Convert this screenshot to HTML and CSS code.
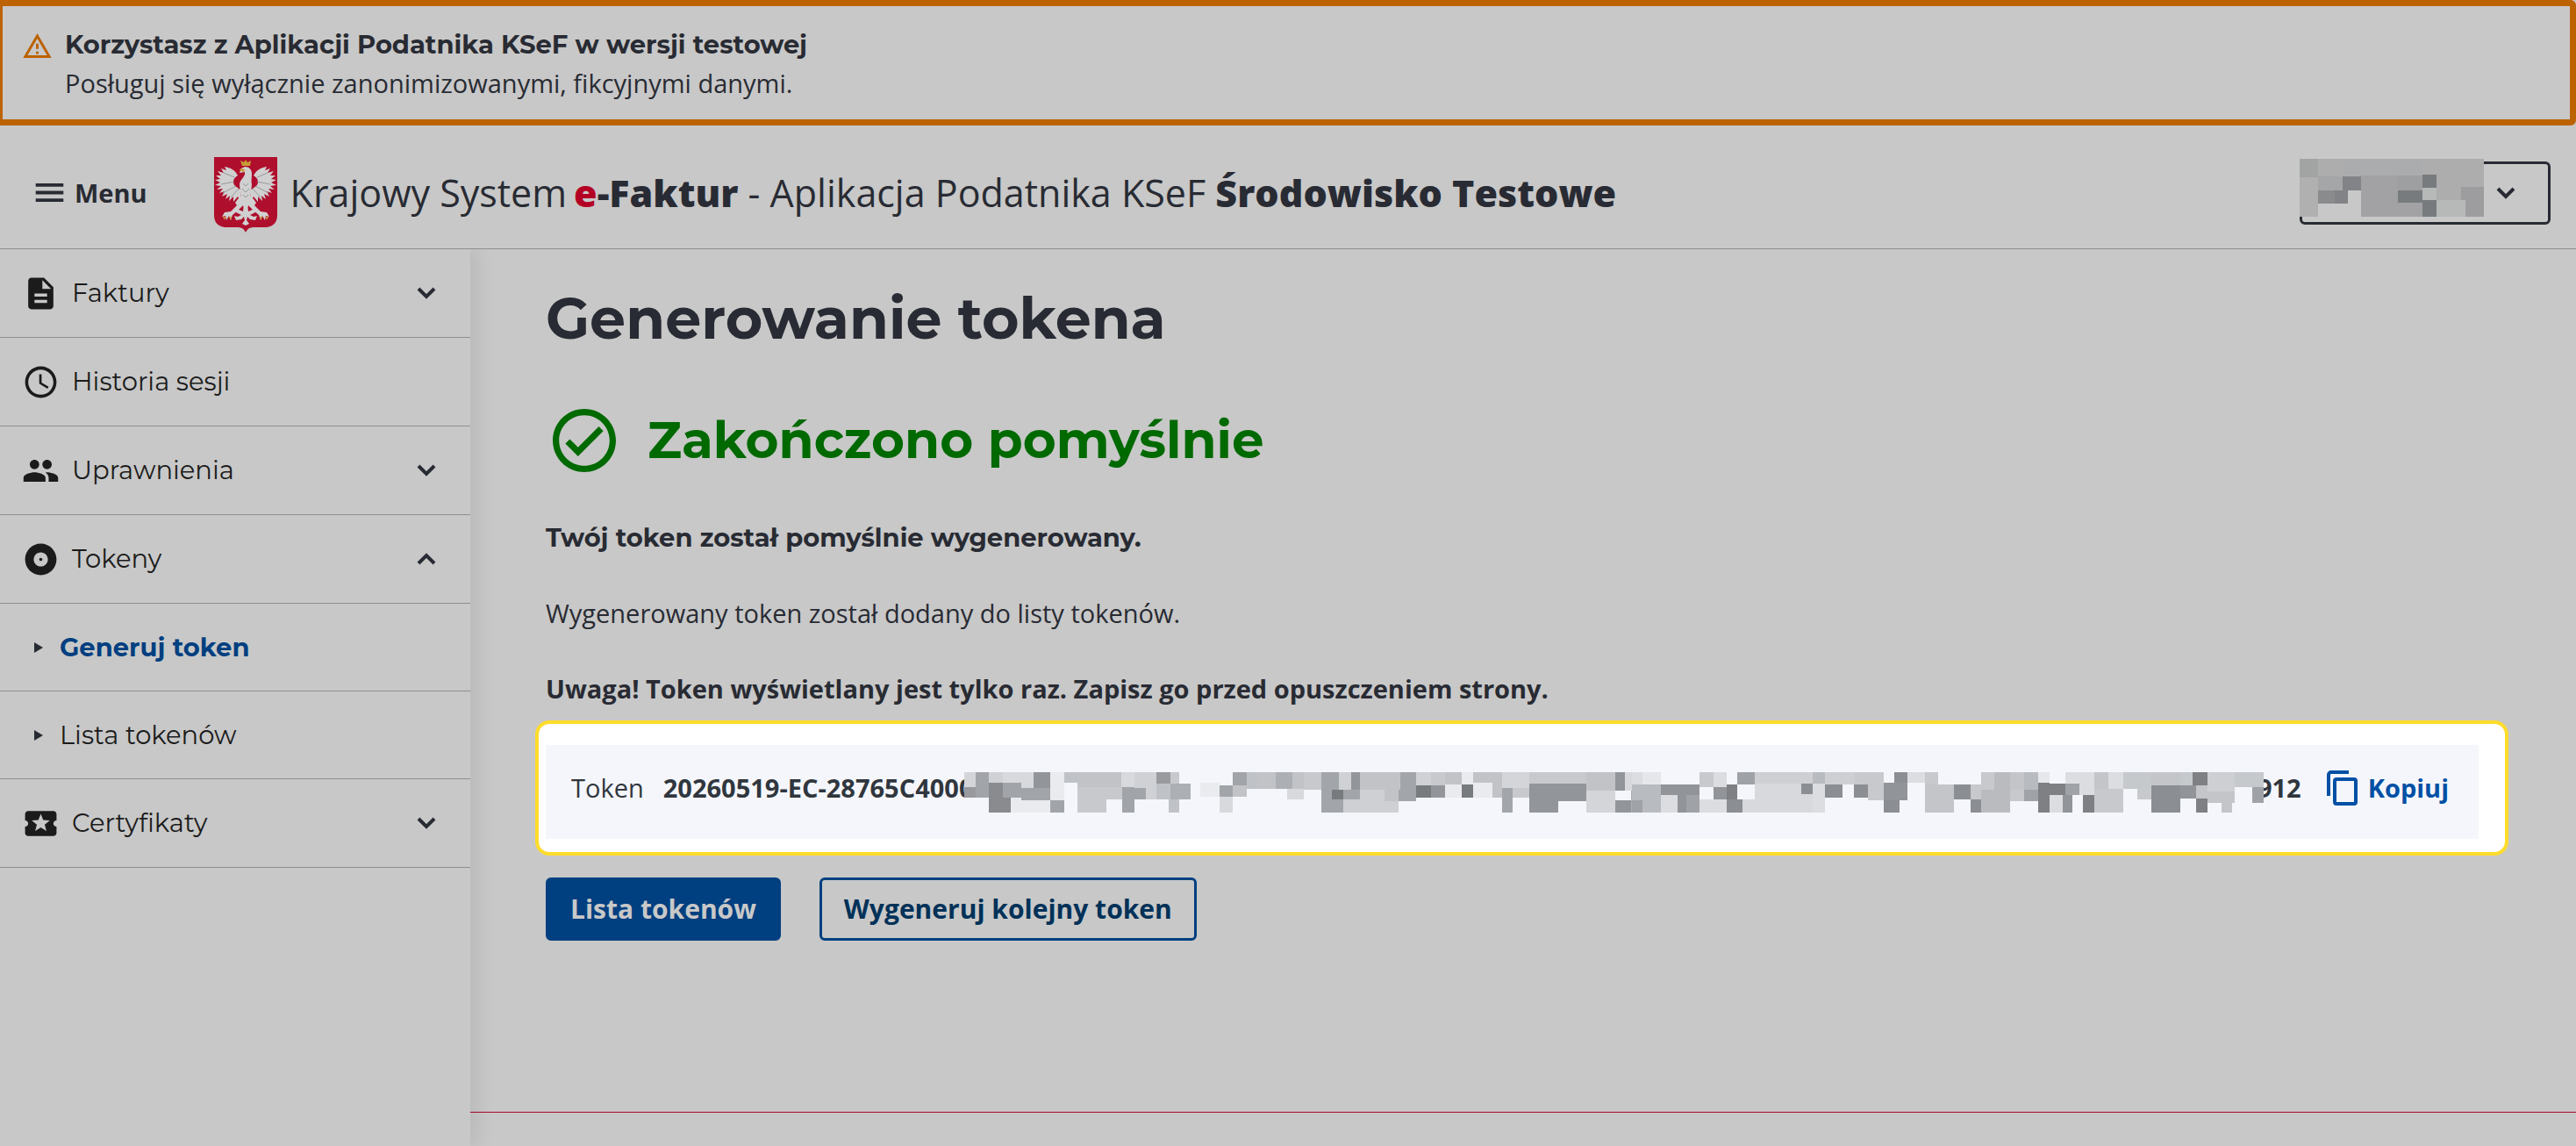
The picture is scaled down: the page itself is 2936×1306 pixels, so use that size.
FILE: index.html
```html
<!DOCTYPE html>
<html lang="pl">
<head>
<meta charset="utf-8">
<title>Generowanie tokena</title>
<link rel="stylesheet" href="styles.css">
</head>
<body>
<div class="app">
  <div class="notice" role="status">
    <svg class="notice-icon" viewBox="1 2 22 19" aria-hidden="true"><path d="M12 5.99 19.53 19H4.47L12 5.99M12 2 1 21h22L12 2zm1 14h-2v2h2v-2zm0-6h-2v4h2v-4z"/></svg>
    <div>
      <p class="notice-title">Korzystasz z Aplikacji Podatnika KSeF w wersji testowej</p>
      <p class="notice-text">Posługuj się wyłącznie zanonimizowanymi, fikcyjnymi danymi.</p>
    </div>
  </div>

  <header class="header">
    <button class="menu-button" type="button">
      <svg class="menu-icon" viewBox="0 0 33 23" aria-hidden="true"><path d="M0 0h33v4H0zM0 9h33v4H0zM0 18h33v4H0z"/></svg>
      Menu
    </button>
    <svg class="crest" viewBox="0 0 72 86" aria-hidden="true">
      <path fill="#af0e2d" d="M0 0h72v66c0 8-4 13-12 14H46c-6 0-8 2-10 6-2-4-4-6-10-6H12C4 79 0 74 0 66z"/>
      <g id="wing" fill="#d0d0d0">
        <path d="M31 38c-2-2-5-3-7-5-4-4-2-9 3-12-3-6-8-9-15-10l2 4-6-2 3 5-7-2 4 5-6 0 5 4-6 1 6 3-6 3 7 1-5 4 7-1-4 5 6-2-3 6 6-3-2 6 5-4-1 6 5-5 0 6 5-6 3 5z"/>
        <path d="M30 44l-6 8 2 3-7 7-7 1-3 5 4-1 1 5 3-5 2 5 2-6 6-5 6-6 4-6z"/>
      </g>
      <use href="#wing" transform="matrix(-1 0 0 1 72 0)"/>
      <g fill="#d0d0d0">
        <path d="M31 13l4-2c5 0 8 3 8 8 0 5-1 8 0 13l-3 22-4 6-4-6-3-22c0-7 7-9 6-15l-6 1z"/>
        <path d="M34 52h4l1 10 7-3 1 4-6 3 4 2 4-1-2 5-6-1-3-3-1 4 3 4-4 2-4-2 3-4-1-4-3 3-6 1-2-5 4 1 4-2-6-3 1-4 7 3z"/>
      </g>
      <path fill="none" stroke="#96989c" stroke-width="1" d="M28 36l-9 10M25 33l-15 8M23 28l-15 3M23 23l-12-5M44 36l9 10M47 33l15 8M49 28l15 3M49 23l12-5M33 30l3 3 3-3M32 36l4 4 4-4M33 43l3 3 3-3"/>
      <path fill="#c79b35" d="M32 10l-2-6 4 2 2-3 2 3 4-2-1 6zM30 13l5 1-1 3-5-2zM10 68l2 4 1-4zM17 68l2 4 1-4zM62 68l-2 4-1-4zM55 68l-2 4-1-4z"/>
    </svg>
    <p class="brand">Krajowy System<b class="brand-name"><span class="brand-e">e</span>-Faktur</b> - Aplikacja Podatnika KSeF <b>Środowisko Testowe</b></p>
    <button class="account" type="button" aria-label="Konto">
      <svg class="account-mask" viewBox="0 0 210 66" aria-hidden="true" shape-rendering="crispEdges">
        <path fill="#adadad" d="M0 0h210v66H0z"/><path fill="#a2a4a3" d="M0 0h21v21H0z"/><path fill="#b0b0b0" d="M0 21h21v45H0z"/>
        <path fill="#abacae" d="M49 0h91v19H49z"/><path fill="#a4a6a8" d="M21 20h28v16H21z"/><path fill="#828387" d="M49 20h21v16H49z"/>
        <path fill="#8a8b8d" d="M21 36h19v15H21z"/><path fill="#828387" d="M40 36h15v15H40z"/><path fill="#c8c8c8" d="M21 51h49v15H21zM55 36h15v15H55z"/>
        <path fill="#a2a2a4" d="M70 19h70v47H70z"/><path fill="#9e9fa1" d="M112 19h28v17h-28z"/><path fill="#777b7e" d="M112 36h28v14h-28zM140 18h16v15h-16zM140 47h16v19h-16z"/>
        <path fill="#b6b9b8" d="M140 33h16v14h-16zM156 47h33v19h-33z"/><path fill="#9d9d9f" d="M184 32h26v15h-26zM189 47h21v19h-21z"/>
      </svg>
      <svg class="chevron" viewBox="0 0 22 14" aria-hidden="true"><path d="M2 2l9 9 9-9"/></svg>
    </button>
  </header>

  <div class="body">
    <nav class="sidebar" aria-label="Menu">
      <a class="nav-item" href="#faktury">
        <svg class="nav-icon" viewBox="0 0 24 24" aria-hidden="true"><path d="M14 2H6c-1.100 0-1.990.9-1.990 2L4 20c0 1.100.89 2 1.990 2H18c1.100 0 2-.9 2-2V8l-6-6zm2 16H8v-2h8v2zm0-4H8v-2h8v2zm-3-5V3.500L18.500 9H13z"/></svg>
        <span>Faktury</span>
        <svg class="chevron" viewBox="0 0 22 14" aria-hidden="true"><path d="M2 2l9 9 9-9"/></svg>
      </a>
      <a class="nav-item" href="#historia">
        <svg class="nav-icon" viewBox="0 0 24 24" aria-hidden="true"><path d="M11.990 2C6.470 2 2 6.480 2 12s4.470 10 9.990 10C17.520 22 22 17.520 22 12S17.520 2 11.990 2zM12 20c-4.420 0-8-3.580-8-8s3.580-8 8-8 8 3.580 8 8-3.580 8-8 8zm.5-13H11v6l5.250 3.150.75-1.230-4.500-2.670z"/></svg>
        <span>Historia sesji</span>
      </a>
      <a class="nav-item" href="#uprawnienia">
        <svg class="nav-icon" viewBox="0 0 24 24" aria-hidden="true"><path d="M16 11c1.660 0 2.990-1.340 2.990-3S17.660 5 16 5c-1.660 0-3 1.340-3 3s1.340 3 3 3zm-8 0c1.660 0 2.990-1.340 2.990-3S9.660 5 8 5C6.340 5 5 6.340 5 8s1.340 3 3 3zm0 2c-2.330 0-7 1.170-7 3.500V19h14v-2.500c0-2.330-4.670-3.500-7-3.500zm8 0c-.29 0-.62.02-.97.05 1.160.84 1.970 1.970 1.970 3.450V19h6v-2.500c0-2.330-4.670-3.500-7-3.500z"/></svg>
        <span>Uprawnienia</span>
        <svg class="chevron" viewBox="0 0 22 14" aria-hidden="true"><path d="M2 2l9 9 9-9"/></svg>
      </a>
      <a class="nav-item" href="#tokeny">
        <svg class="nav-icon" viewBox="0 0 24 24" aria-hidden="true"><path d="M12 2C6.480 2 2 6.480 2 12s4.480 10 10 10 10-4.480 10-10S17.520 2 12 2zm0 14.500c-2.490 0-4.500-2.010-4.500-4.500S9.510 7.500 12 7.500s4.500 2.010 4.500 4.500-2.010 4.500-4.500 4.500zm0-5.500c-.55 0-1 .45-1 1s.45 1 1 1 1-.45 1-1-.45-1-1-1z"/></svg>
        <span>Tokeny</span>
        <svg class="chevron" viewBox="0 0 22 14" aria-hidden="true"><path d="M2 12l9-9 9 9"/></svg>
      </a>
      <a class="nav-item nav-sub nav-current" href="#generuj" aria-current="page">
        <svg class="nav-arrow" viewBox="0 0 10 12" aria-hidden="true"><path d="M0 0l10 6-10 6z"/></svg>
        <span>Generuj token</span>
      </a>
      <a class="nav-item nav-sub" href="#lista">
        <svg class="nav-arrow" viewBox="0 0 10 12" aria-hidden="true"><path d="M0 0l10 6-10 6z"/></svg>
        <span>Lista tokenów</span>
      </a>
      <a class="nav-item" href="#certyfikaty">
        <svg class="nav-icon" viewBox="0 0 24 24" aria-hidden="true"><path d="M20 12c0-1.100.9-2 2-2V6c0-1.100-.9-2-2-2H4c-1.100 0-1.990.9-1.990 2v4c1.100 0 1.990.9 1.990 2s-.89 2-2 2v4c0 1.100.9 2 2 2h16c1.100 0 2-.9 2-2v-4c-1.100 0-2-.9-2-2zm-4.420 4.800L12 14.500l-3.580 2.300 1.080-4.120-3.290-2.690 4.240-.25L12 5.800l1.540 3.950 4.240.25-3.290 2.690 1.090 4.110z"/></svg>
        <span>Certyfikaty</span>
        <svg class="chevron" viewBox="0 0 22 14" aria-hidden="true"><path d="M2 2l9 9 9-9"/></svg>
      </a>
    </nav>

    <main class="main">
      <h1 class="page-title">Generowanie tokena</h1>
      <h2 class="success">
        <svg class="success-icon" viewBox="2 2 20 20" aria-hidden="true"><path d="M12 2C6.480 2 2 6.480 2 12s4.480 10 10 10 10-4.480 10-10S17.520 2 12 2zm0 18c-4.410 0-8-3.590-8-8s3.590-8 8-8 8 3.590 8 8-3.590 8-8 8zm4.590-12.420L10 14.170l-2.590-2.580L6 13l4 4 8-8-1.410-1.420z"/></svg>
        Zakończono pomyślnie
      </h2>
      <p class="lead">Twój token został pomyślnie wygenerowany.</p>
      <p class="text">Wygenerowany token został dodany do listy tokenów.</p>
      <p class="text text-strong">Uwaga! Token wyświetlany jest tylko raz. Zapisz go przed opuszczeniem strony.</p>

      <section class="spotlight">
        <div class="token">
          <span class="token-label">Token</span>
          <b>20260519-EC-28765C4000</b>
          <svg class="token-mask" viewBox="35 63 2909 138" preserveAspectRatio="none" aria-hidden="true" shape-rendering="crispEdges">
            <path fill="#f5f6fb" d="M35 63h2909v138H35z"/>
            <path fill="#d4d5d9" d="M35 63h26v51H35zM1427 126h65v75h-65zM1239 63h60v54h-60z"/>
            <path fill="#989a9e" d="M35 114h26v36H35zM466 63h30v39h-30z"/>
            <path fill="#a1a5a9" d="M61 63h29v87H61zM122 99h41v51h-41zM163 117h64v42h-64zM227 159h32v42h-32zM388 114h28v87h-28zM416 117h25v39h-25zM635 63h33v45h-33zM606 108h29v39h-29z"/>
            <path fill="#d0d1d5" d="M90 63h32v36H90zM416 63h25v54h-25zM441 63h25v93h-25zM1047 63h33v45h-33zM874 63h26v60h-26z"/>
            <path fill="#d8d9dd" d="M122 63h68v36h-68zM163 99h27v18h-27zM386 63h30v51h-30zM606 147h29v54h-29zM757 120h37v36h-37zM1513 63h39v63h-39z"/>
            <path fill="#8a8b8e" d="M90 99h32v51H90zM90 150h49v51H90z"/>
            <path fill="#929599" d="M190 63h37v54h-37zM900 63h21v60h-21zM1299 102h128v60h-128zM1299 162h65v39h-65zM1492 63h21v63h-21zM1492 159h35v42h-35zM1079 108h32v42h-32z"/>
            <path fill="#eaebef" d="M139 150h24v9h64v42h-88zM227 63h32v96h-32zM563 99h43v48h-43zM1149 63h25v42h-25zM1174 99h43v51h-43zM1111 105h38v45h-38z"/>
            <path fill="#bfc3c8" d="M259 63h29v36h-29zM466 102h30v54h-30zM492 156h25v45h-25zM668 63h24v57h-24z"/>
            <path fill="#c2c3c7" d="M288 63h65v51h-65zM353 63h33v51h-33zM635 108h33v39h-33zM692 63h41v57h-41zM770 63h24v57h-24zM921 63h90v60h-90zM976 123h31v39h-31zM1111 63h38v42h-38zM1174 63h65v36h-65zM1217 99h22v51h-22zM1427 63h65v63h-65z"/>
            <path fill="#c8c9cd" d="M288 114h65v87h-65zM353 114h35v42h-35zM794 63h41v60h-41zM496 63h21v39h-21zM1080 63h31v45h-31zM1262 117h37v33h-37zM1299 63h128v39h-128z"/>
            <path fill="#acb0b5" d="M496 102h45v54h-45zM733 63h37v57h-37zM1527 126h41v75h-41z"/>
            <path fill="#a2a6aa" d="M835 63h39v138h-39zM874 156h10v45h-10zM884 123h37v33h-37zM1011 63h36v99h-40v-39h4zM1239 117h23v84h-23z"/>
            <path fill="#777b7e" d="M857 123h27v33h-27zM1047 108h32v42h-32zM1149 105h25v45h-25z"/>
            <path fill="#cfd0d4" d="M921 123h55v39h31v39H884v-45h37z"/>
            <g transform="translate(1529 0)">
              <path fill="#dcdde1" d="M0 63h24v42H0zM65 141h37v60H65zM182 63h30v51h-30zM151 156h61v45h-61zM617 63h40v36h-40zM1066 63h34v57h-34zM1002 102h33v39h-33zM935 141h29v60h-29zM404 102h29v99h-29zM970 63h65v39h-65z"/>
              <path fill="#e6e7eb" d="M24 63h41v42H24zM909 63h26v36h-26z"/>
              <path fill="#b8bbc0" d="M0 105h65v96H24v-42H0zM404 63h29v39h-29zM878 63h31v60h-31z"/>
              <path fill="#9fa3a7" d="M0 159h24v42H0zM123 141h28v60h-28zM235 63h41v42h-41zM878 123h31v39h-31zM970 102h32v39h-32zM1388 114h27v54h-27z"/>
              <path fill="#919498" d="M65 105h86v36H65zM102 141h21v60h-21zM182 114h30v42h-30zM564 99h53v60h-53zM964 141h22v60h-22zM1227 108h35v45h-35z"/>
              <path fill="#c8c9cd" d="M151 63h31v51h-31zM500 63h29v42h-29zM529 63h35v96h-35zM657 63h29v42h-29zM782 63h29v60h-29zM759 105h23v51h-23zM847 123h31v39h-31zM1131 120h31v36h-31zM1035 120h65v81h-65z"/>
              <path fill="#7e8083" d="M212 105h23v51h-23zM935 102h35v39h-35zM909 99h26v102h-26zM1009 141h26v60h-26zM1256 63h32v45h-32zM1262 153h26v48h-26z"/>
              <path fill="#8b8e92" d="M212 156h35v45h-35zM380 102h24v36h-24zM433 105h39v45h-39zM498 105h31v45h-31zM588 63h29v36h-29zM564 159h36v42h-36zM721 105h38v51h-38zM759 156h23v45h-23zM1162 108h65v93h-65z"/>
              <path fill="#cecfd3" d="M276 63h128v39H276zM433 63h67v42h-67zM1288 63h62v66h-62z"/>
              <path fill="#d8d9dd" d="M276 102h104v36h24v63H247v-45h29z"/>
              <path fill="#c4c5c9" d="M657 105h64v96h-64zM847 63h31v60h-31zM1035 63h31v57h-31zM1162 63h65v45h-65zM1262 108h26v45h-26zM1288 129h62v39h-62zM1319 168h24v33h-24z"/>
              <path fill="#babbbf" d="M811 63h36v138h-65v-78h29z"/>
              <path fill="#c5c9cc" d="M1100 63h62v57h-62zM1227 63h29v45h-29zM1350 63h65v51h-65z"/>
            </g>
          </svg>
          <b>912</b>
          <button class="copy" type="button">
            <svg class="copy-icon" viewBox="0 0 35 40" aria-hidden="true"><path d="M2 29V5a3 3 0 0 1 3-3h20"/><rect x="9" y="10" width="24" height="28" rx="2"/></svg>
            Kopiuj
          </button>
        </div>
      </section>

      <div class="actions">
        <button class="btn btn-primary" type="button">Lista tokenów</button>
        <button class="btn" type="button">Wygeneruj kolejny token</button>
      </div>
      <hr class="rule">
    </main>
  </div>
</div>
</body>
</html>
```
FILE: styles.css
```css
* { box-sizing: border-box; }

body {
  margin: 0;
  background: #c8c8c8;
  color: #282b33;
  font: 400 29px/44px "Open Sans", sans-serif;
}

p, h1, h2 { margin: 0; }

button {
  font: inherit;
  color: inherit;
  background: none;
  border: 0;
  padding: 0;
}

svg { display: block; flex: none; }

.app {
  min-height: 100vh;
  display: flex;
  flex-direction: column;
}

.notice {
  display: flex;
  gap: 15px;
  padding: 22px 24px 19px 23px;
  border: 7px solid #bc6200;
  border-left-width: 3px;
  border-radius: 0 6px 6px 0;
}
.notice-icon { width: 33px; height: 28px; margin-top: 9px; fill: #bc6200; }
.notice-title { font: 700 29px/44px Montserrat, Inter, sans-serif; }

.header {
  display: flex;
  align-items: center;
  height: 141px;
  padding: 13px 29px 0 40px;
  border-bottom: 1px solid #8f8f8f;
}
.menu-button { display: flex; align-items: center; gap: 12px; font-weight: 700; }
.menu-icon { width: 33px; height: 22px; fill: #282b33; }
.crest { width: 72px; height: 86px; margin: 5px 0 0 76px; }
.brand { margin-left: 15px; font-size: 43px; line-height: 60px; }
.brand b { font-weight: 800; }
.brand .brand-name { margin-left: 8px; }
.brand-e { color: #b40024; }
.account {
  display: flex;
  align-items: center;
  gap: 14px;
  width: 286px;
  height: 72px;
  margin-left: auto;
  border: 3px solid #282b33;
  border-radius: 6px;
}
.account-mask { width: 210px; height: 66px; margin: -12px 0 0 -3px; }

.chevron {
  width: 22px;
  height: 14px;
  fill: none;
  stroke: #282b33;
  stroke-width: 4;
}

.body { flex: 1; display: flex; }

.sidebar {
  width: 536px;
  flex: none;
  box-shadow: 8px 0 20px rgba(0, 0, 0, 0.08);
  clip-path: inset(0 -40px 0 0);
}
.nav-item {
  display: flex;
  align-items: center;
  gap: 14px;
  height: 101px;
  padding: 0 39px 0 25px;
  border-bottom: 1px solid #8f8f8f;
  color: #1b1b1b;
  font: 400 29px/44px Montserrat, Inter, sans-serif;
  text-decoration: none;
}
.nav-icon { width: 43px; height: 43px; fill: #1b1b1b; }
.nav-item .chevron { margin-left: auto; }
.nav-sub { gap: 19px; height: 100px; padding-left: 39px; }
.nav-arrow { width: 10px; height: 12px; fill: #282b33; }
.nav-current { color: #003f80; font-weight: 700; }

.main {
  flex: 1;
  display: flex;
  flex-direction: column;
  padding-top: 40px;
}
.page-title {
  margin-left: 86px;
  font: 700 65px/78px Montserrat, Inter, sans-serif;
}
.success {
  display: flex;
  align-items: center;
  gap: 36px;
  margin: 64px 0 0 94px;
  color: #006900;
  font: 700 58px/72px Montserrat, Inter, sans-serif;
}
.success-icon { width: 72px; height: 72px; fill: #006900; }
.lead {
  margin: 53px 0 0 86px;
  font: 700 29px/44px Montserrat, Inter, sans-serif;
}
.text { margin: 42px 0 0 86px; }
.text-strong { font-weight: 700; }

.spotlight {
  margin: 14px 77px 0 74px;
  padding: 24px 30px 15px 8px;
  background: #fff;
  border: 4px solid #ffdc2a;
  border-radius: 16px;
}
.token {
  display: flex;
  align-items: center;
  height: 107px;
  padding: 0 34px 10px 29px;
  background: #f5f6fb;
  color: #30363e;
}
.token-label { margin-right: 22px; }
.token-mask { flex: 1; height: 46px; margin: 10px -8px 0 -10px; position: relative; }
.copy {
  display: flex;
  align-items: center;
  gap: 12px;
  margin-left: 29px;
  color: #0050a5;
  font-weight: 700;
}
.copy-icon { width: 35px; height: 40px; fill: none; stroke: #0050a5; stroke-width: 4; }

.actions { display: flex; gap: 44px; margin: 25px 0 0 86px; }
.btn {
  height: 72px;
  padding: 0 25px;
  border: 3px solid #003f80;
  border-radius: 6px;
  color: #003158;
  font-size: 30px;
  font-weight: 700;
}
.btn-primary { background: #003f80; color: #c8c8c8; }

.rule {
  width: 100%;
  margin: auto 0 38px;
  border: 0;
  border-top: 1px solid #a8082c;
}
```
